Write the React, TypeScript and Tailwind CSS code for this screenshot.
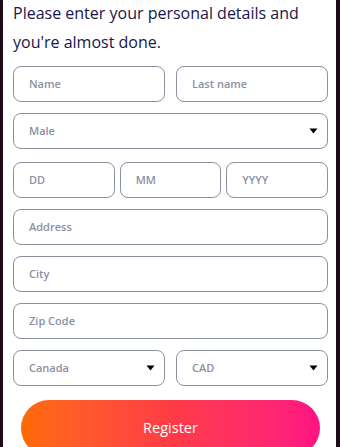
import type { ReactNode } from 'react';

const font = { fontFamily: '"Open Sans", "Noto Sans", sans-serif' };

function Field({ label, className = '' }: { label: string; className?: string }) {
  return (
    <div
      className={`flex h-[36px] items-center rounded-[8px] border border-[#8b909d] bg-white pl-[15px] text-[11px] font-semibold text-[#8b90a3] ${className}`}
    >
      {label}
    </div>
  );
}

function Caret() {
  return (
    <svg width="9" height="6" viewBox="0 0 9 6" className="shrink-0">
      <path d="M0.5 0.5 H8.5 L4.5 5.5 Z" fill="#000" />
    </svg>
  );
}

function SelectBox({ label, className = '' }: { label: string; className?: string }) {
  return (
    <div
      className={`flex h-[36px] items-center justify-between rounded-[8px] border border-[#8b909d] bg-white pl-[15px] pr-[9px] text-[11px] font-semibold text-[#8b90a3] ${className}`}
    >
      <span>{label}</span>
      <Caret />
    </div>
  );
}

function Row({ children, gap }: { children: ReactNode; gap: string }) {
  return <div className={`flex ${gap}`}>{children}</div>;
}

export default function App() {
  return (
    <div className="flex h-[447px] w-[340px] overflow-hidden bg-[#1e0a19]" style={font}>
      <div className="w-[3px] shrink-0" />
      <div className="flex-1 bg-white pl-[10px] pr-[8px]">
        <h1 className="-mt-[1px] text-[16px] font-normal leading-[29px] text-[#18164a]">
          Please enter your personal details and you're almost done.
        </h1>

        <div className="mt-[9px] flex flex-col">
          <Row gap="gap-[11px]">
            <Field label="Name" className="flex-1" />
            <Field label="Last name" className="flex-1" />
          </Row>

          <SelectBox label="Male" className="mt-[11px]" />

          <div className="mt-[13px]">
            <Row gap="gap-[5px]">
              <Field label="DD" className="flex-1" />
              <Field label="MM" className="flex-1" />
              <Field label="YYYY" className="flex-1" />
            </Row>
          </div>

          <Field label="Address" className="mt-[11px]" />
          <Field label="City" className="mt-[11px]" />
          <Field label="Zip Code" className="mt-[11px]" />

          <div className="mt-[11px]">
            <Row gap="gap-[11px]">
              <SelectBox label="Canada" className="flex-1" />
              <SelectBox label="CAD" className="flex-1" />
            </Row>
          </div>

          <div className="mt-[14px] px-[8px]">
            <button className="flex h-[56px] w-full items-center justify-center rounded-full bg-gradient-to-r from-[#ff6a00] via-[#ff3b45] to-[#ff1283] text-[14.5px] font-medium text-white">
              Register
            </button>
          </div>
        </div>
      </div>
      <div className="w-[4px] shrink-0" />
    </div>
  );
}
